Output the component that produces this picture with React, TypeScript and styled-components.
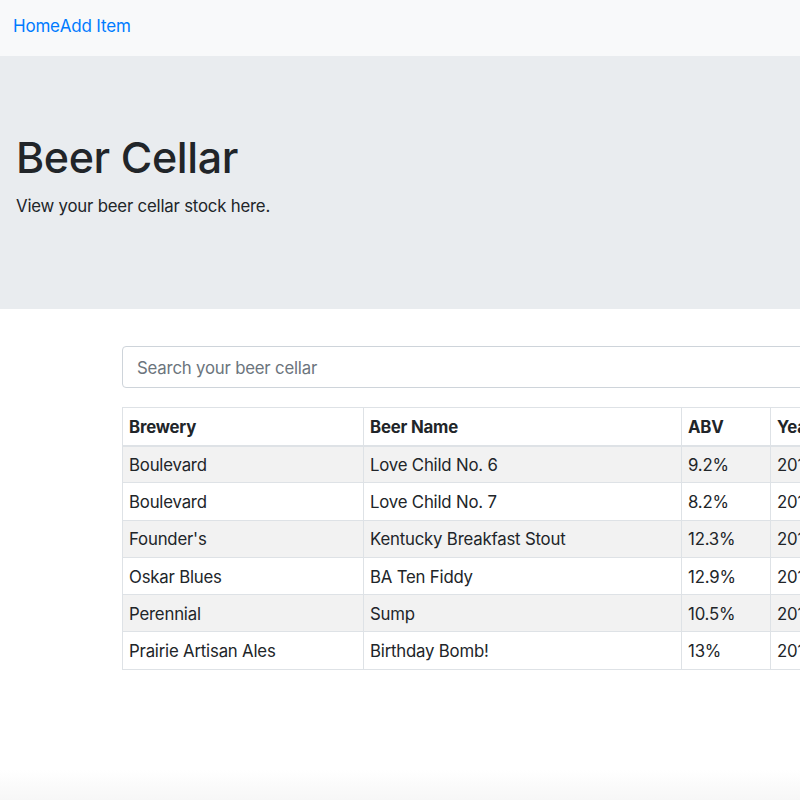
import React from "react";
import styled, { createGlobalStyle } from "styled-components";

const Global = createGlobalStyle`
  html, body { margin: 0; padding: 0; background: #fff; overflow-x: hidden; }
  body { font-family: Inter, "Noto Sans", sans-serif; color: #212529; }
  * { box-sizing: border-box; }
`;

const Page = styled.div`
  width: 800px;
  min-height: 800px;
  position: relative;
  overflow: hidden;
  background: linear-gradient(to bottom, #fff 0, #fff 770px, #f7f7f7 800px);
`;

const Nav = styled.nav`
  height: 56px;
  background: #f8f9fa;
  display: flex;
  align-items: center;
  padding: 0 13px 4px;
`;

const NavLink = styled.a`
  color: #007bff;
  font-size: 17px;
  text-decoration: none;
  letter-spacing: -0.2px;
`;

const Jumbo = styled.header`
  height: 253px;
  background: #e9ecef;
  padding: 80px 16px 0;
`;

const Title = styled.h1`
  margin: 0;
  font-size: 43px;
  font-weight: 500;
  line-height: 1;
  letter-spacing: -0.4px;
`;

const Lead = styled.p`
  margin: 17px 0 0;
  font-size: 16.8px;
  line-height: 1.2;
  letter-spacing: -0.2px;
`;

const Main = styled.main`
  padding: 37px 0 0 122px;
  width: 1100px;
`;

const Search = styled.input`
  display: block;
  width: 100%;
  height: 42px;
  border: 1px solid #ced4da;
  border-radius: 4px;
  padding: 2px 14px 0;
  font-family: inherit;
  font-size: 16.8px;
  letter-spacing: -0.2px;
  color: #495057;
  background: #fff;
  outline: none;
  &::placeholder { color: #6c757d; }
`;

const Table = styled.table`
  margin-top: 19px;
  border-collapse: collapse;
  font-size: 16.8px;
  letter-spacing: -0.2px;
`;

const Th = styled.th<{ $w: number }>`
  width: ${(p) => p.$w}px;
  text-align: left;
  font-weight: 700;
  height: 38px;
  padding: 1px 6px 0;
  border: 1px solid #dee2e6;
  border-bottom-width: 2px;
`;

const Tr = styled.tr<{ $odd: boolean }>`
  background: ${(p) => (p.$odd ? "#f2f2f2" : "#fff")};
`;

const Td = styled.td`
  height: 37.3px;
  padding: 1px 6px 0;
  border: 1px solid #dee2e6;
`;

const cols = [
  { name: "Brewery", w: 241 },
  { name: "Beer Name", w: 318 },
  { name: "ABV", w: 89 },
  { name: "Year", w: 120 },
];

const rows = [
  ["Boulevard", "Love Child No. 6", "9.2%", "2017"],
  ["Boulevard", "Love Child No. 7", "8.2%", "2017"],
  ["Founder's", "Kentucky Breakfast Stout", "12.3%", "2018"],
  ["Oskar Blues", "BA Ten Fiddy", "12.9%", "2018"],
  ["Perennial", "Sump", "10.5%", "2018"],
  ["Prairie Artisan Ales", "Birthday Bomb!", "13%", "2018"],
];

export default function App() {
  return (
    <Page>
      <Global />
      <Nav>
        <NavLink href="#">Home</NavLink>
        <NavLink href="#">Add Item</NavLink>
      </Nav>
      <Jumbo>
        <Title>Beer Cellar</Title>
        <Lead>View your beer cellar stock here.</Lead>
      </Jumbo>
      <Main>
        <Search placeholder="Search your beer cellar" />
        <Table>
          <thead>
            <tr>
              {cols.map((c) => (
                <Th key={c.name} $w={c.w}>{c.name}</Th>
              ))}
            </tr>
          </thead>
          <tbody>
            {rows.map((r, i) => (
              <Tr key={i} $odd={i % 2 === 0}>
                {r.map((cell, j) => (
                  <Td key={j}>{cell}</Td>
                ))}
              </Tr>
            ))}
          </tbody>
        </Table>
      </Main>
    </Page>
  );
}
